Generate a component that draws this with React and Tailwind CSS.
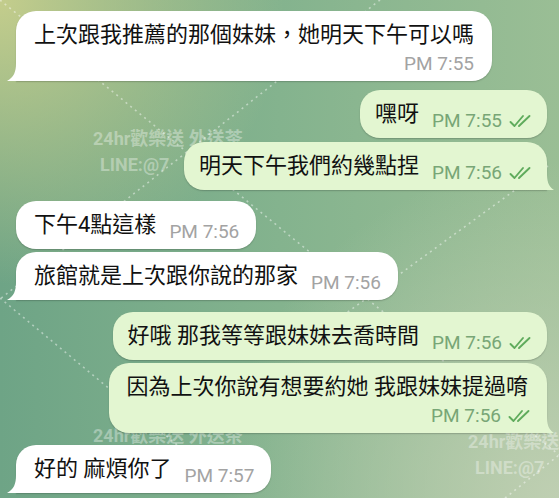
import React from "react";

function Checks() {
  return (
    <svg width="25" height="14" viewBox="0 0 25 14" fill="none" stroke="#5fab5c" strokeWidth="1.9" strokeLinecap="round" strokeLinejoin="round" className="shrink-0">
      <path d="M1.5 8 L5.5 12 L14 2" />
      <path d="M10 12 L20.5 2" />
    </svg>
  );
}

function TailLeft() {
  return (
    <svg className="absolute bottom-0 left-[-9px]" width="12" height="18" viewBox="0 0 12 18">
      <path d="M12 0 L9 0 C9 9 7 14 0 18 L12 18 Z" fill="#ffffff" />
    </svg>
  );
}

function TailRight() {
  return (
    <svg className="absolute bottom-0 right-[-7px]" width="12" height="18" viewBox="0 0 12 18">
      <path d="M0 0 L5 0 C5 9 6 14 12 18 L0 18 Z" fill="#e3f6d1" />
    </svg>
  );
}

function Time({ out, children }) {
  return (
    <span className={out ? "text-[19px] leading-[22px] text-[#78a676] whitespace-nowrap" : "text-[19px] leading-[22px] text-[#a3a3a3] whitespace-nowrap"}>
      {children}
    </span>
  );
}

function Bubble({ out, tail, text, time, twoLine, className }) {
  const shape = out
    ? tail
      ? "rounded-[20px] rounded-br-none"
      : "rounded-[20px]"
    : tail
    ? "rounded-[20px] rounded-bl-none"
    : "rounded-[20px]";
  const color = out ? "bg-[#e3f6d1]" : "bg-white";
  const pos = out ? "self-end mr-[12px]" : "self-start ml-[16px]";
  if (twoLine) {
    return (
      <div className={`relative ${pos} ${className} ${color} ${shape} shadow-[0_1px_1.5px_rgba(0,0,0,0.2)] pl-[18px] ${out ? "pr-[14px]" : "pr-[18px]"} pt-[9px] pb-[6px] flex flex-col`}>
        <div className={`text-[22px] leading-[30px] text-[#111] whitespace-nowrap ${out ? "pr-[5px]" : ""}`}>{text}</div>
        <div className="mt-[3px] flex items-center justify-end gap-[7px]">
          <Time out={out}>{time}</Time>
          {out && <Checks />}
        </div>
        {tail && (out ? <TailRight /> : <TailLeft />)}
      </div>
    );
  }
  return (
    <div className={`relative ${pos} ${className} ${color} ${shape} shadow-[0_1px_1.5px_rgba(0,0,0,0.2)] ${out ? "pl-[15px] pr-[13px]" : "pl-[18px] pr-[17px]"} py-[9px] flex items-end`}>
      <span className="text-[22px] leading-[30px] text-[#111] whitespace-nowrap">{text}</span>
      <span className={`flex items-center gap-[7px] translate-y-[3px] ml-[13px]`}>
        <Time out={out}>{time}</Time>
        {out && <Checks />}
      </span>
      {tail && (out ? <TailRight /> : <TailLeft />)}
    </div>
  );
}

function Watermark({ className, noLine }) {
  return (
    <div className={`absolute ${className} text-white/35 font-bold text-[18px] leading-[24px] whitespace-nowrap`}>
      <div>24hr歡樂送 外送茶</div>
      {!noLine && <div className="ml-[7px] mt-[2px]">LINE:@7</div>}
    </div>
  );
}

export default function App() {
  return (
    <div className="relative w-[559px] h-[498px] overflow-hidden [font-family:Roboto,'Noto_Sans_CJK_TC',sans-serif] bg-[radial-gradient(circle_at_0%_0%,#c4cd8c_0%,rgba(196,205,140,0)_38%),radial-gradient(circle_at_100%_100%,#bfcfb2_0%,rgba(191,207,178,0)_45%),linear-gradient(to_right,#6ea486_0%,#84b38e_50%,#9abe95_100%)]">
      <svg className="absolute inset-0" width="559" height="498" fill="none" stroke="rgba(255,255,255,0.45)" strokeWidth="1.6" strokeDasharray="2 4">
        <line x1="0" y1="0" x2="559" y2="455" />
        <line x1="380" y1="0" x2="0" y2="299" />
        <line x1="0" y1="298" x2="200" y2="464" />
        <line x1="548" y1="166" x2="330" y2="325" />
        <line x1="505" y1="498" x2="559" y2="455" />
      </svg>
      <Watermark className="left-[93px] top-[127px]" />
      <Watermark className="left-[93px] top-[424px]" noLine />
      <Watermark className="left-[468px] top-[430px]" />

      <div className="relative flex flex-col pt-[11px]">
        <Bubble text="上次跟我推薦的那個妹妹，她明天下午可以嗎" time="PM 7:55" tail twoLine />
        <Bubble out text="嘿呀" time="PM 7:55" className="mt-[9px]" />
        <Bubble out tail text="明天下午我們約幾點捏" time="PM 7:56" className="mt-[4px]" />
        <Bubble text="下午4點這樣" time="PM 7:56" className="mt-[11px]" />
        <Bubble tail text="旅館就是上次跟你說的那家" time="PM 7:56" className="mt-[3px]" />
        <Bubble out text="好哦 那我等等跟妹妹去喬時間" time="PM 7:56" className="mt-[12px]" />
        <Bubble out tail twoLine text="因為上次你說有想要約她 我跟妹妹提過唷" time="PM 7:56" className="mt-[3px]" />
        <Bubble tail text="好的 麻煩你了" time="PM 7:57" className="mt-[12px]" />
      </div>
    </div>
  );
}
